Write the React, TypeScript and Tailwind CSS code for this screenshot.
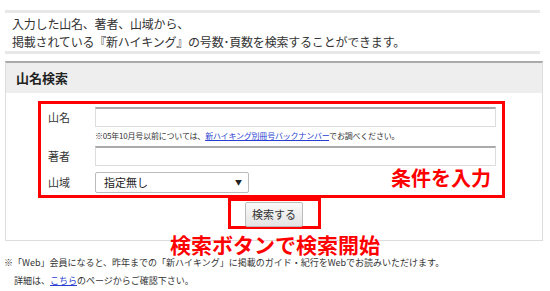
const jp = { fontFamily: '"Noto Sans CJK JP", "Noto Sans", sans-serif' };

function Field({ label, children }: { label: string; children: React.ReactNode }) {
  return (
    <div className="flex items-start">
      <div className="w-[54px] pl-[7px] text-[11px] text-[#333] leading-[20px]">{label}</div>
      <div className="flex-1">{children}</div>
    </div>
  );
}

export default function App() {
  return (
    <div className="relative w-[550px] h-[291px] bg-white overflow-hidden text-[#333]" style={jp}>
      {/* intro */}
      <div className="mt-[10px] mx-[5px] w-[535px] border-y-[3px] border-[#e8e8e8] px-[7px] pt-[2px] text-[12px] leading-[18px] tracking-[-0.2px]">
        <p>入力した山名、著者、山域から、</p>
        <p>掲載されている『新ハイキング』の号数･頁数を検索することができます。</p>
      </div>

      {/* search panel */}
      <div className="mt-[7px] mx-[5px] w-[538px] border border-[#ddd] border-t-2 border-t-[#aaa]">
        <div className="h-[30px] bg-[#eee] px-[10px] flex items-center text-[13px] font-bold text-[#222]">
          山名検索
        </div>
        <div className="pt-[8px] pb-[11px]">
          <div className="ml-[32px] w-[467px] border-[3px] border-[#f00] pt-[3px] pb-[2px]">
            <Field label="山名">
              <div className="w-[401px] h-[20px] border border-[#ddd] border-t-2 border-t-[#aaa] bg-white" />
              <p className="mt-[3px] mb-[4px] text-[8px] leading-[12px] text-[#333] tracking-tight">
                ※05年10月号以前については、
                <span className="text-[#2a3fd1] underline">新ハイキング別冊号バックナンバー</span>
                でお調べください。
              </p>
            </Field>
            <Field label="著者">
              <div className="w-[401px] h-[20px] border border-[#ddd] border-t-2 border-t-[#aaa] bg-white" />
            </Field>
            <div className="mt-[6px]">
              <Field label="山域">
                <div className="w-[154px] h-[21px] border border-[#bbb] rounded-[2px] bg-white flex items-center justify-between pl-[8px] pr-[6px] text-[11px] text-[#222]">
                  <span>指定無し</span>
                  <span className="text-[7px]">▼</span>
                </div>
              </Field>
            </div>
          </div>
          <div className="flex justify-center">
            <div className="w-[93px] h-[31px] border-[3px] border-[#f00] flex items-start justify-center pt-[1px]">
              <button className="w-[58px] h-[25px] border border-[#bbb] rounded-[2px] bg-gradient-to-b from-[#fafafa] to-[#e4e4e4] text-[11px] text-[#333]">
                検索する
              </button>
            </div>
          </div>
        </div>
      </div>

      {/* footer */}
      <div className="mt-[13px] ml-[4px] text-[9px] leading-[18px] text-[#333]">
        <p>※「Web」会員になると、昨年までの「新ハイキング」に掲載のガイド・紀行をWebでお読みいただけます。</p>
        <p className="pl-[10px]">
          詳細は、<span className="text-[#2a3fd1] underline">こちら</span>のページからご確認下さい。
        </p>
      </div>

      {/* annotations */}
      <span className="absolute left-[391px] top-[168px] text-[20px] font-bold text-[#f00] leading-none">条件を入力</span>
      <span className="absolute left-[170px] top-[234px] text-[21px] font-bold text-[#f00] leading-none">検索ボタンで検索開始</span>
    </div>
  );
}
